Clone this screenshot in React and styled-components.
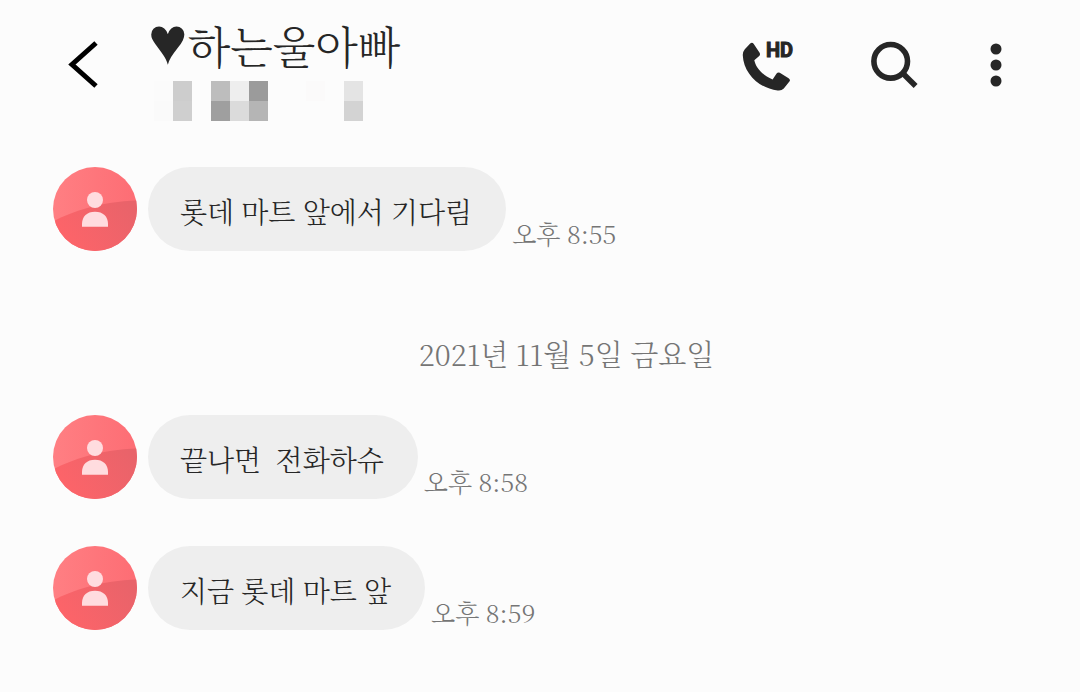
import React from 'react';
import styled, { createGlobalStyle } from 'styled-components';

const mosaic = [
  ['#fbfbfb', '#cdcdcd', '', '#bdbdbd', '#eeeeee', '#9b9b9b', '', '', '#fbfafa', '', '#e4e4e4'],
  ['#fafafa', '#cfcfcf', '', '#9f9f9f', '#dbdbdb', '#b5b5b5', '', '', '', '', '#d3d3d3'],
];

const Avatar = () => (
  <AvatarIcon viewBox="0 0 84 84" aria-hidden="true">
    <defs>
      <linearGradient id="top" x1="0" y1="0" x2="1" y2="0">
        <stop offset="0" stopColor="#ff7f83" />
        <stop offset="1" stopColor="#fd6d74" />
      </linearGradient>
      <linearGradient id="bottom" x1="0" y1="0.6" x2="1" y2="0.2">
        <stop offset="0" stopColor="#fe6469" />
        <stop offset="1" stopColor="#e8636a" />
      </linearGradient>
      <clipPath id="round">
        <circle cx="42" cy="42" r="42" />
      </clipPath>
    </defs>
    <g clipPath="url(#round)">
      <rect width="84" height="84" fill="url(#top)" />
      <path d="M0 54.5C20 44 48 34.5 84 33.5V84H0Z" fill="url(#bottom)" />
    </g>
    <circle cx="42" cy="33" r="8" fill="#ffdcdf" />
    <path d="M29 59.8V57C29 49.5 34 44.8 42 44.8S55 49.5 55 57V59.8Z" fill="#ffdcdf" />
  </AvatarIcon>
);

const Message = ({ text, time }) => (
  <MessageRow>
    <Avatar />
    <Bubble>{text}</Bubble>
    <Time>{time}</Time>
  </MessageRow>
);

const App = () => {
  return (
    <>
      <GlobalStyle />
      <Header>
        <IconButton $width={48} aria-label="뒤로">
          <svg width="48" height="48" viewBox="0 0 48 48">
            <path d="M36 2L12 23.5L36 45" fill="none" stroke="#000" strokeWidth="5" />
          </svg>
        </IconButton>
        <Contact>
          <Name><Heart>♥</Heart>하는울아빠</Name>
          <Mosaic aria-hidden="true">
            {mosaic.flat().map((color, i) => <Tile key={i} $color={color} />)}
          </Mosaic>
        </Contact>
        <Actions>
          <IconButton $width={64} aria-label="HD 통화">
            <svg width="64" height="52" viewBox="0 0 64 52">
              <path
                fill="#262626"
                d="M8.2 4.6Q10 2.8 11.6 4.8L17.6 13.8Q18.6 15.6 17.2 17L12.3 21.2C13.8 28.5 20.5 36.5 30.6 40.4L34.6 34.4Q36 32.9 37.8 33.8L46.6 39.2Q48.8 40.8 47.4 42.6L41.8 49.4Q39.4 52 35.6 51.4C17 49.5 1.5 34 .8 16.4Q.6 12.8 2.8 10.2Z"
              />
              <HdText x="24" y="18">HD</HdText>
            </svg>
          </IconButton>
          <IconButton $width={52} aria-label="검색">
            <svg width="52" height="52" viewBox="0 0 52 52" fill="none" stroke="#262626" strokeWidth="5.6">
              <circle cx="22.7" cy="22.3" r="16.8" />
              <path d="M34.5 34L47.6 47" />
            </svg>
          </IconButton>
          <IconButton $width={28} aria-label="더보기">
            <svg width="28" height="52" viewBox="0 0 28 52" fill="#262626">
              <circle cx="14" cy="10" r="5.5" />
              <circle cx="14" cy="26" r="5.5" />
              <circle cx="14" cy="42" r="5.5" />
            </svg>
          </IconButton>
        </Actions>
      </Header>
      <Thread>
        <Message text="롯데 마트 앞에서 기다림" time="오후 8:55" />
        <DateLine>2021년 11월 5일 금요일</DateLine>
        <Message text="끝나면  전화하슈" time="오후 8:58" />
        <Message text="지금 롯데 마트 앞" time="오후 8:59" />
      </Thread>
    </>
  );
};

export default App;

const GlobalStyle = createGlobalStyle`
* {
  box-sizing: border-box;
}
body {
  margin: 0;
  background: #fcfcfc;
  color: #262626;
  font-family: 'Noto Serif CJK KR', 'Noto Sans CJK KR', serif;
  font-weight: 300;
}
`;

const Header = styled.header`
  display: flex;
  align-items: center;
  height: 130px;
  padding: 0 70px 0 60px;
`;

const IconButton = styled.button`
  display: block;
  flex: none;
  width: ${({ $width }) => $width}px;
  padding: 0;
  border: 0;
  background: none;
  cursor: pointer;

  svg {
    display: block;
  }
`;

const Contact = styled.div`
  flex: 1;
  min-width: 0;
  margin-left: 40px;
`;

const Name = styled.h1`
  margin: 0;
  font-size: 44px;
  font-weight: 300;
  line-height: 72px;
  white-space: nowrap;
`;

const Heart = styled.span`
  font-family: 'DejaVu Sans', sans-serif;
  font-size: 67px;
  line-height: 0;
`;

const Mosaic = styled.div`
  display: grid;
  grid-template-columns: repeat(11, 19px);
  grid-auto-rows: 20px;
  margin-left: 6px;
`;

const Tile = styled.span`
  background: ${({ $color }) => $color || 'transparent'};
`;

const Actions = styled.div`
  display: flex;
  align-items: center;
  gap: 62px;
`;

const HdText = styled.text`
  fill: #262626;
  stroke: #262626;
  stroke-width: 1px;
  font-family: Roboto, sans-serif;
  font-size: 20px;
  font-weight: 700;
`;

const Thread = styled.main`
  display: flex;
  flex-direction: column;
  padding: 37px 0 60px 53px;
`;

const MessageRow = styled.div`
  display: flex;
  align-items: flex-end;

  & + & {
    margin-top: 47px;
  }
`;

const AvatarIcon = styled.svg`
  flex: none;
  width: 84px;
  height: 84px;
  margin-right: 11px;
`;

const Bubble = styled.p`
  margin: 0;
  padding: 26px 34px 22px 32px;
  border-radius: 42px;
  background: #eeeeee;
  font-size: 28px;
  line-height: 36px;
  white-space: pre-wrap;
`;

const Time = styled.time`
  flex: none;
  margin-left: 6px;
  color: #757575;
  font-size: 25px;
  line-height: 36px;
`;

const DateLine = styled.p`
  margin: 83px 0 41px;
  color: #757575;
  font-size: 29px;
  line-height: 40px;
  text-align: center;
`;
